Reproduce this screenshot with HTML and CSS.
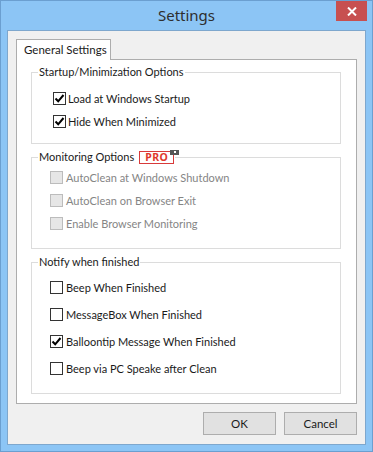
FILE: index.html
```html
<!DOCTYPE html>
<html lang="en">
<head>
    <meta charset="UTF-8">
    <title>Settings</title>
    <link rel="stylesheet" href="styles.css">
</head>
<body>
    <div class="window">
        <!-- Title bar -->
        <div class="titlebar">
            <span class="title">Settings</span>
            <span class="close">
                <svg width="10" height="9" viewBox="0 0 10 9"><path d="M1 0.5 L9 8.5 M9 0.5 L1 8.5" stroke="#fff" stroke-width="2"/></svg>
            </span>
        </div>

        <div class="client">
            <div class="tabs"><span class="tab">General Settings</span></div>

            <div class="panel">
                <fieldset class="group group-startup">
                    <legend>Startup/Minimization Options</legend>
                    <label class="row"><span class="box checked"><svg width="11" height="11" viewBox="0 0 11 11"><path d="M1.5 5.5 L4.2 8.3 L9.5 2" fill="none" stroke="#000" stroke-width="2"/></svg></span>Load at Windows Startup</label>
                    <label class="row"><span class="box checked"><svg width="11" height="11" viewBox="0 0 11 11"><path d="M1.5 5.5 L4.2 8.3 L9.5 2" fill="none" stroke="#000" stroke-width="2"/></svg></span>Hide When Minimized</label>
                </fieldset>

                <fieldset class="group group-monitor">
                    <legend>Monitoring Options <span class="pro">PRO<span class="pro-tag"></span></span></legend>
                    <label class="row disabled"><span class="box"></span>AutoClean at Windows Shutdown</label>
                    <label class="row disabled"><span class="box"></span>AutoClean on Browser Exit</label>
                    <label class="row disabled"><span class="box"></span>Enable Browser Monitoring</label>
                </fieldset>

                <fieldset class="group group-notify">
                    <legend>Notify when finished</legend>
                    <label class="row"><span class="box"></span>Beep When Finished</label>
                    <label class="row"><span class="box"></span>MessageBox When Finished</label>
                    <label class="row"><span class="box checked"><svg width="11" height="11" viewBox="0 0 11 11"><path d="M1.5 5.5 L4.2 8.3 L9.5 2" fill="none" stroke="#000" stroke-width="2"/></svg></span>Balloontip Message When Finished</label>
                    <label class="row"><span class="box"></span>Beep via PC Speake after Clean</label>
                </fieldset>
            </div>

            <div class="buttons">
                <button class="btn">OK</button>
                <button class="btn">Cancel</button>
            </div>
        </div>
    </div>
</body>
</html>
```

FILE: styles.css
```css
body { margin: 0; font-family: Lato, "Noto Sans", sans-serif; font-size: 11px; color: #1a1a1a; }
.window { width: 373px; height: 452px; box-sizing: border-box; border: 1px solid #6b9fd0; background-color: #8cc5f5; display: flex; flex-direction: column; }
.titlebar { height: 29px; display: flex; align-items: flex-start; flex-shrink: 0; }
.title { flex: 1; padding-left: 36px; text-align: center; font-family: "Noto Sans", sans-serif; font-size: 15px; line-height: 29px; color: #2e2e2e; }
.close { width: 31px; height: 20px; margin-right: 5px; background-color: #c75050; display: flex; align-items: center; justify-content: center; }
.client { flex: 1; margin: 0 6px 6px; padding: 8px; border: 1px solid #7ea7cd; background-color: #f0f0f0; display: flex; flex-direction: column; }
.tabs { display: flex; }
.tab { width: 95px; height: 21px; box-sizing: border-box; margin-bottom: -1px; padding-left: 7px; border: 1px solid #adadad; border-bottom: none; background-color: #fff; font-size: 11.5px; line-height: 20px; white-space: nowrap; position: relative; z-index: 1; }
.panel { flex: 1; padding: 4px 15px 0 14px; border: 1px solid #adadad; background-color: #fff; }
.group { margin: 0; padding: 0 6px; border: 1px solid #dcdcdc; min-inline-size: 0; }
.group legend { padding: 0 1px; line-height: 16px; height: 16px; display: flex; align-items: center; }
.group-startup { padding-top: 7px; padding-bottom: 10px; }
.group-startup .row { height: 23px; }
.group-startup .box { margin-left: 15px; margin-right: 2px; }
.group-monitor { margin-top: 5px; padding-top: 1px; padding-bottom: 13px; }
.group-monitor .row { height: 23px; }
.group-notify { margin-top: 5px; padding-top: 4px; padding-bottom: 11px; }
.group-notify .row { height: 27px; }
.row { display: flex; align-items: center; white-space: nowrap; }
.box { width: 13px; height: 13px; box-sizing: border-box; margin-left: 12px; margin-right: 3px; border: 1px solid #333; background-color: #fff; display: flex; align-items: center; justify-content: center; }
.disabled { color: #858585; }
.disabled .box { border-color: #bcbcbc; background-color: #e6e6e6; }
.pro { position: relative; margin-left: 5px; width: 35px; height: 13px; box-sizing: border-box; border: 1px solid #d83a3a; color: #e0382e; font-family: "Noto Sans", sans-serif; font-size: 10.5px; font-weight: bold; line-height: 11px; letter-spacing: 0.5px; display: flex; align-items: center; justify-content: center; }
.pro-tag { position: absolute; top: -2px; right: -6px; width: 9px; height: 5px; background-color: #555; }
.pro-tag::after { content: ""; position: absolute; left: 4px; top: 1px; width: 2px; height: 2px; background-color: #fff; }
.buttons { display: flex; justify-content: flex-end; gap: 8px; margin-top: 8px; padding-bottom: 1px; }
.btn { width: 73px; height: 23px; border: 1px solid #adadad; background-color: #e1e1e1; font-family: Lato, "Noto Sans", sans-serif; font-size: 11.5px; color: #1a1a1a; padding: 0; }
```
